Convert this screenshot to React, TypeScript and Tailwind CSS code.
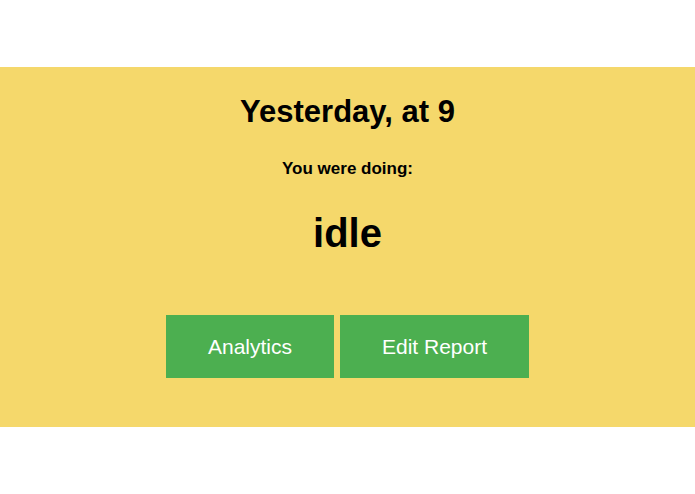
export default function App() {
  return (
    <div className="w-[695px] h-[494px] bg-white flex flex-col" style={{ fontFamily: '"Liberation Sans", Arial, sans-serif' }}>
      <div className="h-[67px]" />
      <div className="h-[360px] bg-[#F5D86B] flex flex-col items-center pt-[27px] text-black">
        <h1 className="text-[31px] leading-[36px] font-bold">Yesterday, at 9</h1>
        <p className="mt-[29px] text-[17px] leading-[20px] font-bold">You were doing:</p>
        <p className="mt-[31px] text-[40px] leading-[46px] font-bold">idle</p>
        <div className="mt-[59px] flex gap-[6px]">
          <button className="h-[63px] px-[42px] bg-[#4CAF50] text-white text-[21px]">Analytics</button>
          <button className="h-[63px] px-[42px] bg-[#4CAF50] text-white text-[21px]">Edit Report</button>
        </div>
      </div>
    </div>
  );
}
